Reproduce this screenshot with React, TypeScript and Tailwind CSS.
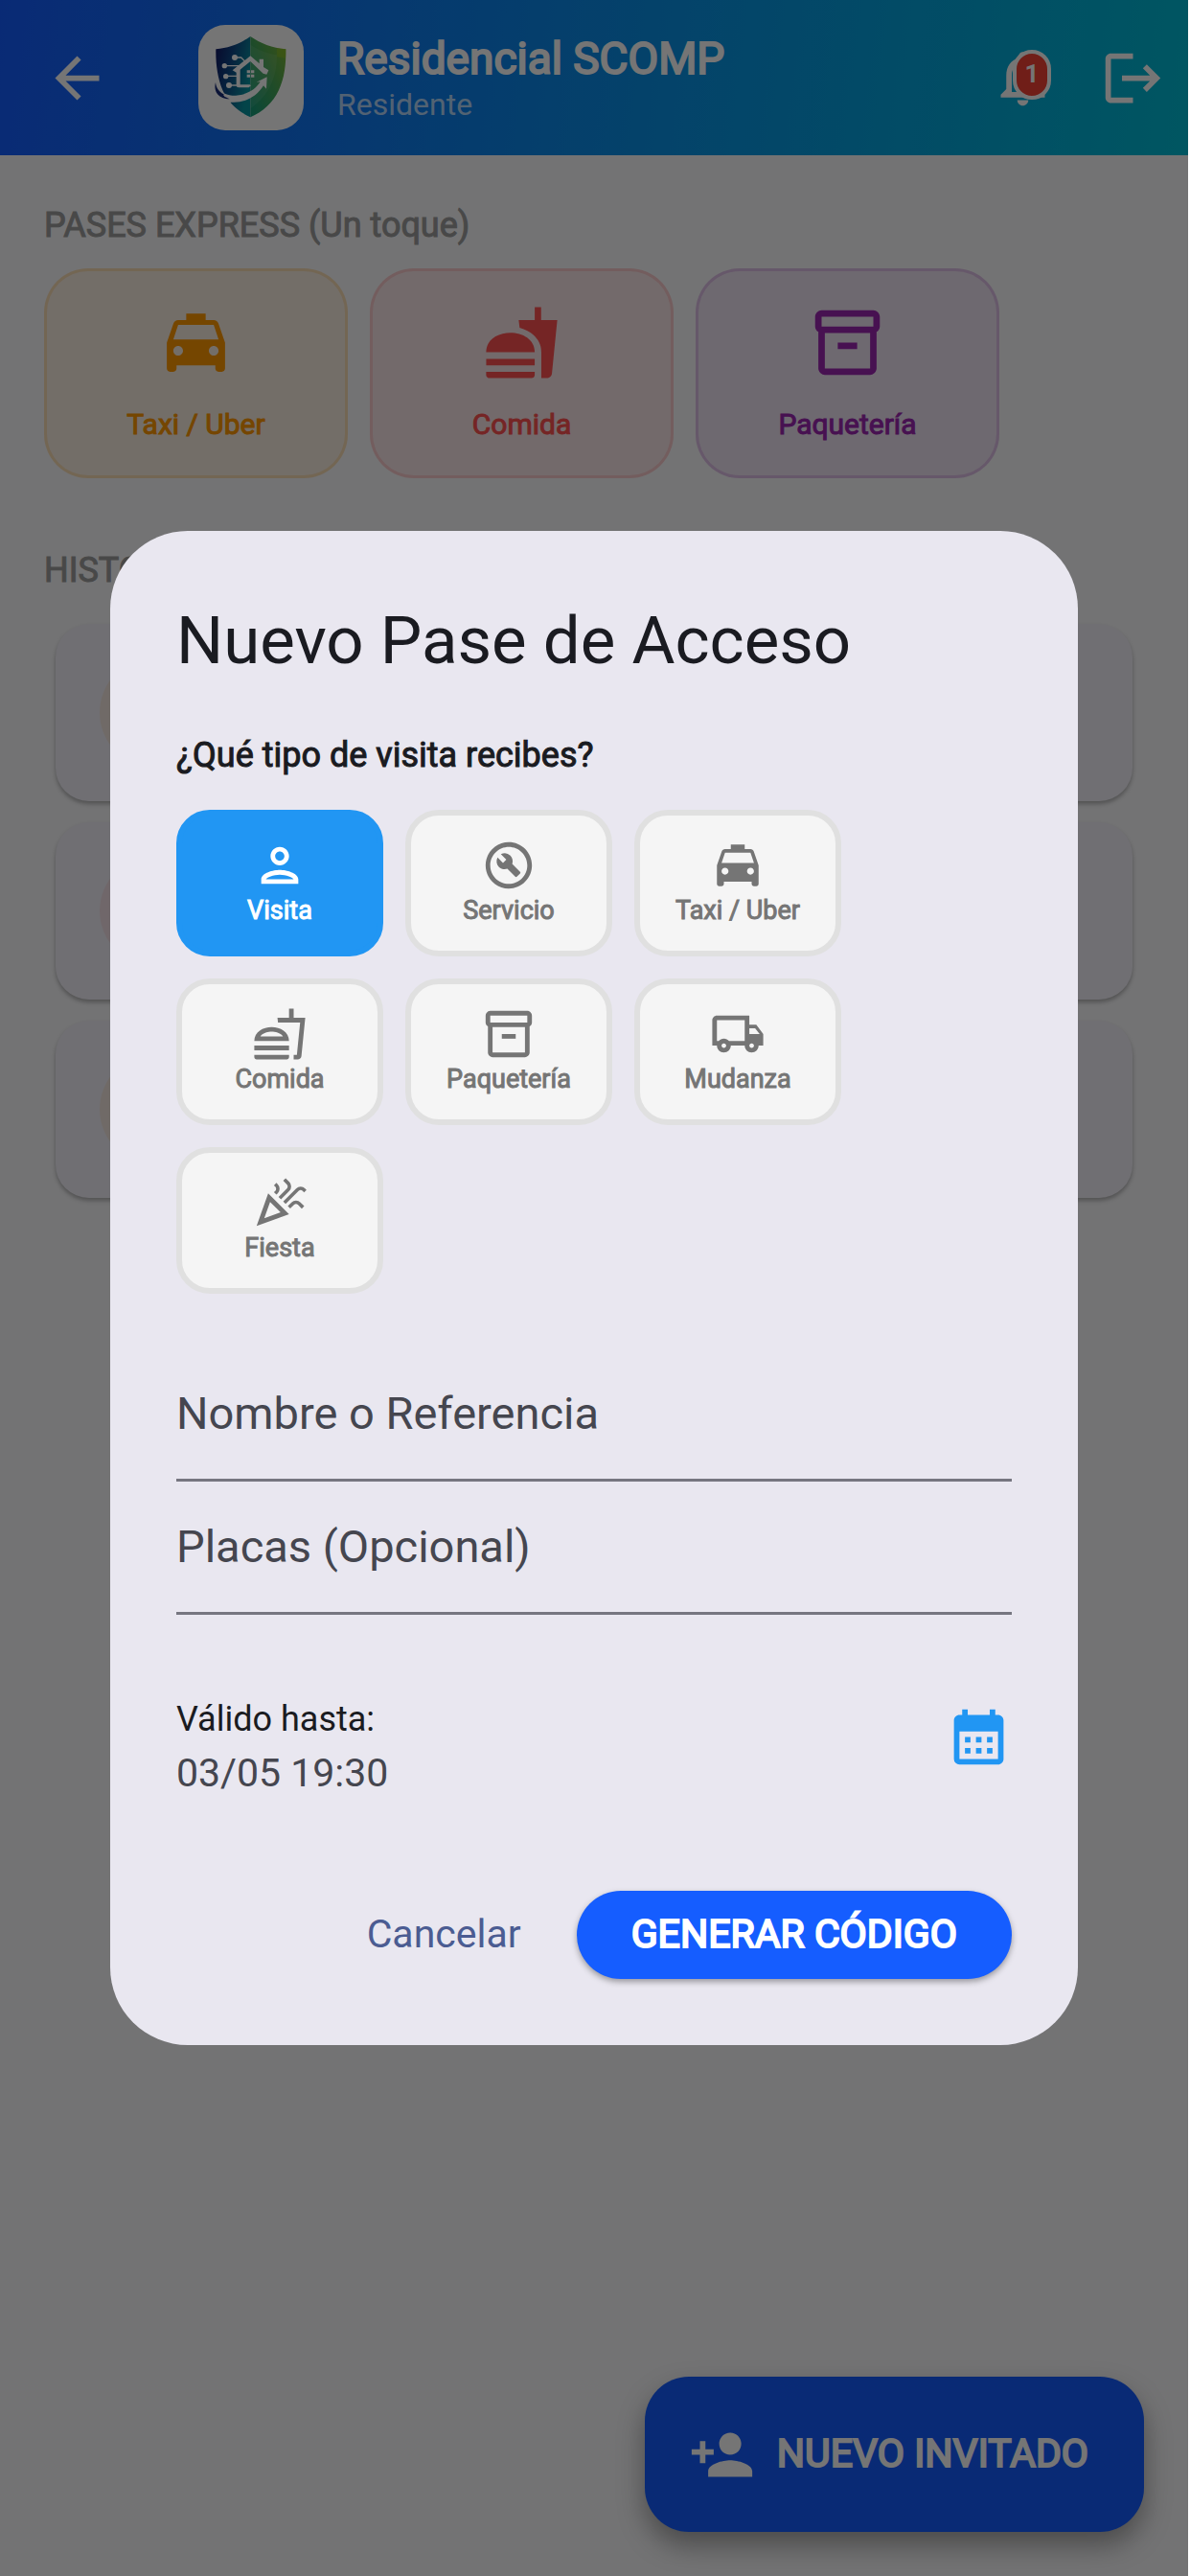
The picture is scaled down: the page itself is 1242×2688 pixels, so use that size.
import { useState } from "react";
import {
  MdArrowBack,
  MdCalendarMonth,
  MdFastfood,
  MdLocalTaxi,
  MdLogout,
  MdOutlineBuildCircle,
  MdOutlineCelebration,
  MdOutlineFastfood,
  MdOutlineInventory2,
  MdOutlineLocalShipping,
  MdOutlineNotifications,
  MdOutlinePerson,
  MdPersonAdd,
} from "react-icons/md";

const expressPasses = [
  {
    name: "Taxi / Uber",
    Icon: MdLocalTaxi,
    style: "text-[#ff9800] bg-[#ff9800]/10 border-[#ff9800]/20",
  },
  {
    name: "Comida",
    Icon: MdFastfood,
    style: "text-[#ff5252] bg-[#ff5252]/10 border-[#ff5252]/20",
  },
  {
    name: "Paquetería",
    Icon: MdOutlineInventory2,
    style: "text-[#9c27b0] bg-[#9c27b0]/10 border-[#9c27b0]/20",
  },
];

const history = [
  { id: 1, avatar: "bg-[#ff9800]/10" },
  { id: 2, avatar: "bg-[#ff5252]/10" },
  { id: 3, avatar: "bg-[#ff9800]/10" },
];

const visitTypes = [
  { name: "Visita", Icon: MdOutlinePerson },
  { name: "Servicio", Icon: MdOutlineBuildCircle },
  { name: "Taxi / Uber", Icon: MdLocalTaxi },
  { name: "Comida", Icon: MdOutlineFastfood },
  { name: "Paquetería", Icon: MdOutlineInventory2 },
  { name: "Mudanza", Icon: MdOutlineLocalShipping },
  { name: "Fiesta", Icon: MdOutlineCelebration },
];

const Logo = () => (
  <svg viewBox="0 0 330 330" className="w-full h-full" aria-hidden="true">
    <defs>
      <linearGradient id="shieldLeft" x1="0" y1="0" x2="1" y2="0.5">
        <stop offset="0" stopColor="#14125e" />
        <stop offset="0.45" stopColor="#0f4585" />
        <stop offset="1" stopColor="#0894a0" />
      </linearGradient>
      <linearGradient id="shieldRight" x1="0" y1="1" x2="1" y2="0">
        <stop offset="0" stopColor="#129a7c" />
        <stop offset="0.5" stopColor="#43a45a" />
        <stop offset="1" stopColor="#83b52f" />
      </linearGradient>
    </defs>
    <path d="M163 36C132 58 96 72 55 76C54 122 60 166 76 204C94 244 126 272 163 289Z" fill="url(#shieldLeft)" />
    <path d="M163 36C194 58 232 72 274 76C275 122 270 166 252 204C234 244 201 272 163 289Z" fill="url(#shieldRight)" />
    <path d="M163 62C188 79 214 89 246 94C246 152 230 216 163 262Z" fill="#ffffff" opacity="0.08" />
    <path d="M246 72L274 76L273 104L246 100Z" fill="#8fbf1f" opacity="0.5" />
    {/* circuit traces */}
    <g stroke="#fff" strokeWidth="4" fill="none">
      <path d="M114 102H134L146 114" />
      <path d="M82 128H126" />
      <path d="M86 160H122" />
      <path d="M96 189H124" />
    </g>
    {/* house outline, window and arrow */}
    <g fill="#fff">
      <circle cx="114" cy="102" r="9" />
      <circle cx="82" cy="128" r="8" />
      <circle cx="86" cy="161" r="8" />
      <circle cx="96" cy="189" r="9" />
      <path d="M107 142L163 97L191 121V107H204V132L220 142L214 155L203 152L163 114L131 140V187H161L165 190L158 196H126Q119 196 119 189V149Z" />
      <path d="M152 142H162V151H152ZM165 142H175V151H165ZM152 155H162V164H152ZM165 155H175V164H165Z" />
      <path d="M54 180C60 205 84 220 106 221C148 221 178 205 194 178L182 179L215 163L213 200L204 190C184 222 150 245 102 242C78 252 50 222 54 180Z" />
    </g>
    <path d="M54 180C46 210 66 232 98 232C84 226 76 222 80 217C66 210 56 198 54 180Z" fill="#1a2d78" />
  </svg>
);

// Underlined text field, its label sits on the line until something is typed
const Field = ({ id, label }: { id: string; label: string }) => (
  <div className="relative">
    <input
      id={id}
      placeholder=" "
      className="peer block w-full h-[139px] border-b-3 border-[#767680] text-[46px] outline-none"
    />
    <label
      htmlFor={id}
      className="absolute inset-x-0 top-0 h-[136px] flex items-center text-[47px] text-[#45464f] peer-focus:h-[40px] peer-focus:text-[35px] peer-[:not(:placeholder-shown)]:h-[40px] peer-[:not(:placeholder-shown)]:text-[35px]"
    >
      {label}
    </label>
  </div>
);

const App = () => {
  const [selected, setSelected] = useState("Visita");

  return (
    <div className="relative min-h-screen mr-[2px] bg-[#fafafc] font-['Roboto',sans-serif]">
      <header className="h-[162px] pl-[46px] pr-[23px] flex items-center bg-[linear-gradient(97deg,#155dff,#00bcd4)] text-white">
        <button aria-label="Volver">
          <MdArrowBack className="size-[69px]" />
        </button>
        <div className="size-[110px] ml-[92px] rounded-[28px] bg-white overflow-hidden">
          <Logo />
        </div>
        <div className="ml-[35px] flex-1">
          <h1 className="text-[46px] leading-[56px] [-webkit-text-stroke:2px]">
            Residencial SCOMP
          </h1>
          <p className="text-[32px] leading-[40px] text-white/70">Residente</p>
        </div>
        <button aria-label="Notificaciones" className="relative mr-[46px]">
          <MdOutlineNotifications className="size-[69px]" />
          <span className="absolute top-[5px] right-[5px] w-[40px] h-[52px] flex items-center justify-center rounded-full border-4 border-white bg-[#f44336] text-[26px] font-bold">
            1
          </span>
        </button>
        <button aria-label="Salir">
          <MdLogout className="size-[69px]" />
        </button>
      </header>

      <main className="px-[46px] pt-[48px]">
        <h2 className="text-[36px] leading-[50px] text-[#9e9e9e] [-webkit-text-stroke:1px]">
          PASES EXPRESS (Un toque)
        </h2>
        <div className="mt-[20px] flex gap-[23px]">
          {expressPasses.map(({ name, Icon, style }) => (
            <button
              key={name}
              className={`w-[317px] h-[219px] flex flex-col items-center justify-center gap-[24px] rounded-[46px] border-3 ${style}`}
            >
              <Icon className="size-[81px]" />
              <span className="text-[30px] leading-[41px] [-webkit-text-stroke:1px]">
                {name}
              </span>
            </button>
          ))}
        </div>

        <h2 className="mt-[71px] text-[36px] leading-[50px] text-[#9e9e9e] [-webkit-text-stroke:1px]">
          HISTORIAL
        </h2>
        <ul className="mt-[31px] mx-[12px] flex flex-col gap-[22px]">
          {history.map(({ id, avatar }) => (
            <li
              key={id}
              className="h-[185px] px-[46px] flex items-center rounded-[35px] bg-[#f4f2fa] shadow-[0_3px_4px_rgba(0,0,0,0.28)]"
            >
              <span className={`size-[115px] rounded-full ${avatar}`} />
            </li>
          ))}
        </ul>
      </main>

      <button className="absolute bottom-[46px] right-[46px] h-[162px] pl-[46px] pr-[58px] flex items-center gap-[23px] rounded-[46px] bg-[#155dff] text-white shadow-[0_14px_28px_rgba(0,0,0,0.35)]">
        <MdPersonAdd className="size-[69px]" />
        <span className="text-[41px] [-webkit-text-stroke:2px]">
          NUEVO INVITADO
        </span>
      </button>

      <div className="absolute inset-0 px-[115px] flex items-center bg-black/54">
        <div
          role="dialog"
          aria-labelledby="dialog-title"
          className="w-full p-[69px] rounded-[81px] bg-[#e9e7f0] text-[#1a1b21]"
        >
          <h2 id="dialog-title" className="text-[69px] leading-[92px]">
            Nuevo Pase de Acceso
          </h2>
          <p className="mt-[48px] text-[36px] leading-[50px] [-webkit-text-stroke:1px]">
            ¿Qué tipo de visita recibes?
          </p>
          <div className="mt-[32px] flex flex-wrap gap-[23px]">
            {visitTypes.map(({ name, Icon }) => (
              <button
                key={name}
                aria-pressed={selected === name}
                onClick={() => setSelected(name)}
                className={`w-[216px] h-[153px] flex flex-col items-center justify-center rounded-[35px] border-6 ${
                  selected === name
                    ? "bg-[#2196f3] border-[#2196f3] text-white"
                    : "bg-[#f5f5f5] border-[#e0e0e0] text-[#757575]"
                }`}
              >
                <Icon className="size-[58px]" />
                <span className="text-[27px] leading-[37px] [-webkit-text-stroke:1px]">
                  {name}
                </span>
              </button>
            ))}
          </div>

          <div className="mt-[57px]">
            <Field id="nombre" label="Nombre o Referencia" />
            <Field id="placas" label="Placas (Opcional)" />
          </div>

          <div className="mt-[81px] flex items-start justify-between">
            <div className="leading-[56px]">
              <p className="text-[36px]">Válido hasta:</p>
              <p className="text-[41px] text-[#45464f]">03/05 19:30</p>
            </div>
            <button aria-label="Elegir fecha" className="h-[92px] text-[#2196f3]">
              <MdCalendarMonth className="size-[69px]" />
            </button>
          </div>

          <div className="mt-[95px] flex justify-end gap-[23px] text-[41px]">
            <button className="px-[35px] text-[#4b5c92]">Cancelar</button>
            <button className="h-[92px] px-[57px] rounded-full bg-[#155dff] text-white shadow-[0_3px_6px_rgba(0,0,0,0.35)] [-webkit-text-stroke:2px]">
              GENERAR CÓDIGO
            </button>
          </div>
        </div>
      </div>
    </div>
  );
};

export default App;
